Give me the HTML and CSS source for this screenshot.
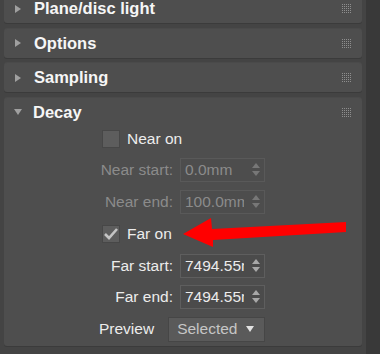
FILE: index.html
```html
<!DOCTYPE html>
<html lang="en">
<head>
    <meta charset="UTF-8">
    <title>Decay rollout</title>
    <link rel="stylesheet" href="styles.css">
</head>
<body>
    <div class="app">
        <div class="rollouts">
            <section class="rollout">
                <div class="rollout-head"><span class="caret"></span><span class="title">Plane/disc light</span><span class="grip"></span></div>
            </section>
            <section class="rollout">
                <div class="rollout-head"><span class="caret"></span><span class="title">Options</span><span class="grip"></span></div>
            </section>
            <section class="rollout">
                <div class="rollout-head"><span class="caret"></span><span class="title">Sampling</span><span class="grip"></span></div>
            </section>
            <section class="rollout open">
                <div class="rollout-head"><span class="caret"></span><span class="title">Decay</span><span class="grip"></span></div>
                <div class="rollout-body">
                    <div class="row check-row">
                        <span class="checkbox"></span><span>Near on</span>
                    </div>
                    <div class="row field disabled">
                        <label>Near start:</label>
                        <div class="spinner"><span class="value">0.0mm</span><svg class="arrows" width="8" height="14" viewBox="0 0 8 14"><polygon points="4,0 8,5 0,5"/><polygon points="0,8 8,8 4,13"/></svg></div>
                    </div>
                    <div class="row field disabled">
                        <label>Near end:</label>
                        <div class="spinner"><span class="value">100.0mm</span><svg class="arrows" width="8" height="14" viewBox="0 0 8 14"><polygon points="4,0 8,5 0,5"/><polygon points="0,8 8,8 4,13"/></svg></div>
                    </div>
                    <div class="row check-row">
                        <span class="checkbox"><svg width="18" height="18" viewBox="0 0 18 18"><polyline points="3,9 7,13 15,4" /></svg></span><span>Far on</span>
                    </div>
                    <div class="row field">
                        <label>Far start:</label>
                        <div class="spinner"><span class="value">7494.55mm</span><svg class="arrows" width="8" height="14" viewBox="0 0 8 14"><polygon points="4,0 8,5 0,5"/><polygon points="0,8 8,8 4,13"/></svg></div>
                    </div>
                    <div class="row field">
                        <label>Far end:</label>
                        <div class="spinner"><span class="value">7494.55mm</span><svg class="arrows" width="8" height="14" viewBox="0 0 8 14"><polygon points="4,0 8,5 0,5"/><polygon points="0,8 8,8 4,13"/></svg></div>
                    </div>
                    <div class="row preview-row">
                        <label>Preview</label>
                        <div class="dropdown"><span>Selected</span><span class="drop-caret"></span></div>
                    </div>
                </div>
            </section>
        </div>
        <div class="strip"></div>

        <!-- annotation arrow drawn over the panel -->
        <svg class="annotation" width="380" height="354" viewBox="0 0 380 354">
            <polygon points="183,234 211,218 212,229 346,222 346,232 213,240 213,247" />
        </svg>
    </div>
</body>
</html>
```

FILE: styles.css
```css
body {
    margin: 0;
    background-color: #444444;
    font-family: "Liberation Sans", Arial, sans-serif;
    font-size: 15.5px;
    color: #ececec;
    overflow: hidden;
}
.app {
    position: relative;
    display: flex;
    width: 380px;
    height: 354px;
}
.rollouts {
    display: flex;
    flex-direction: column;
    gap: 5.5px;
    width: 358px;
    margin-left: 4px;
    margin-top: -6px;
}
.rollout {
    background-color: #4e4e4e;
    border-radius: 3px;
    box-shadow: 0 1px 0 #3b3b3b, 0 -1px 0 #4a4a4a;
}
.rollout-head {
    display: flex;
    align-items: center;
    height: 29px;
    padding: 0 11px 0 10px;
}
.caret {
    width: 0;
    height: 0;
    margin-left: 1px;
    border-left: 6px solid #a0a0a0;
    border-top: 4px solid transparent;
    border-bottom: 4px solid transparent;
}
.open .caret {
    margin-left: 0;
    border-left: 4px solid transparent;
    border-right: 4px solid transparent;
    border-top: 6px solid #a0a0a0;
    border-bottom: none;
}
.title {
    margin-left: 13px;
    font-size: 16.5px;
    font-weight: bold;
    color: #f6f6f6;
    flex: 1;
}
.open .title {
    margin-left: 11px;
}
.grip {
    width: 9px;
    height: 9px;
    background: conic-gradient(at 1px 1px, transparent 75%, #8e8e8e 0) 0 0 / 2px 2px;
}
.strip {
    width: 14px;
    margin-left: 4px;
    background-color: #393939;
}

.rollout-body {
    display: flex;
    flex-direction: column;
    gap: 7.75px;
    padding-bottom: 5px;
}
.row {
    display: flex;
    align-items: center;
    height: 24px;
}
.check-row {
    padding-left: 98px;
    gap: 7px;
}
.checkbox {
    box-sizing: border-box;
    width: 18px;
    height: 18px;
    background-color: #5d5d5d;
    border: 1px solid #474747;
}
.checkbox svg {
    display: block;
    margin: -1px;
}
.checkbox polyline {
    fill: none;
    stroke: #c4c4c4;
    stroke-width: 2.6;
}
.field {
    display: grid;
    grid-template-columns: 169px 85px;
    column-gap: 7px;
}
.field label {
    text-align: right;
}
.spinner {
    box-sizing: border-box;
    display: flex;
    align-items: center;
    height: 24px;
    padding-left: 4px;
    border: 1px solid #5e5e5e;
    background-color: #4b4b4b;
}
.value {
    width: 59px;
    overflow: hidden;
    white-space: nowrap;
}
.arrows {
    margin-left: 8px;
    fill: #a8a8a8;
}
.disabled {
    color: #8b8b8b;
}
.disabled .spinner {
    border-color: #595959;
    background-color: #4d4d4d;
}
.disabled .arrows {
    fill: #777777;
}
.preview-row {
    padding-left: 95px;
    gap: 14px;
}
.dropdown {
    box-sizing: border-box;
    display: flex;
    align-items: center;
    justify-content: space-between;
    width: 97px;
    height: 25px;
    padding: 0 10px 0 8px;
    background-color: #5a5a5a;
    border: 1px solid #464646;
    color: #c6c6c6;
}
.drop-caret {
    width: 0;
    height: 0;
    border-left: 4px solid transparent;
    border-right: 4px solid transparent;
    border-top: 6px solid #e2e2e2;
}
.annotation {
    position: absolute;
    left: 0;
    top: 0;
    pointer-events: none;
}
.annotation polygon {
    fill: #ff0000;
}
```
